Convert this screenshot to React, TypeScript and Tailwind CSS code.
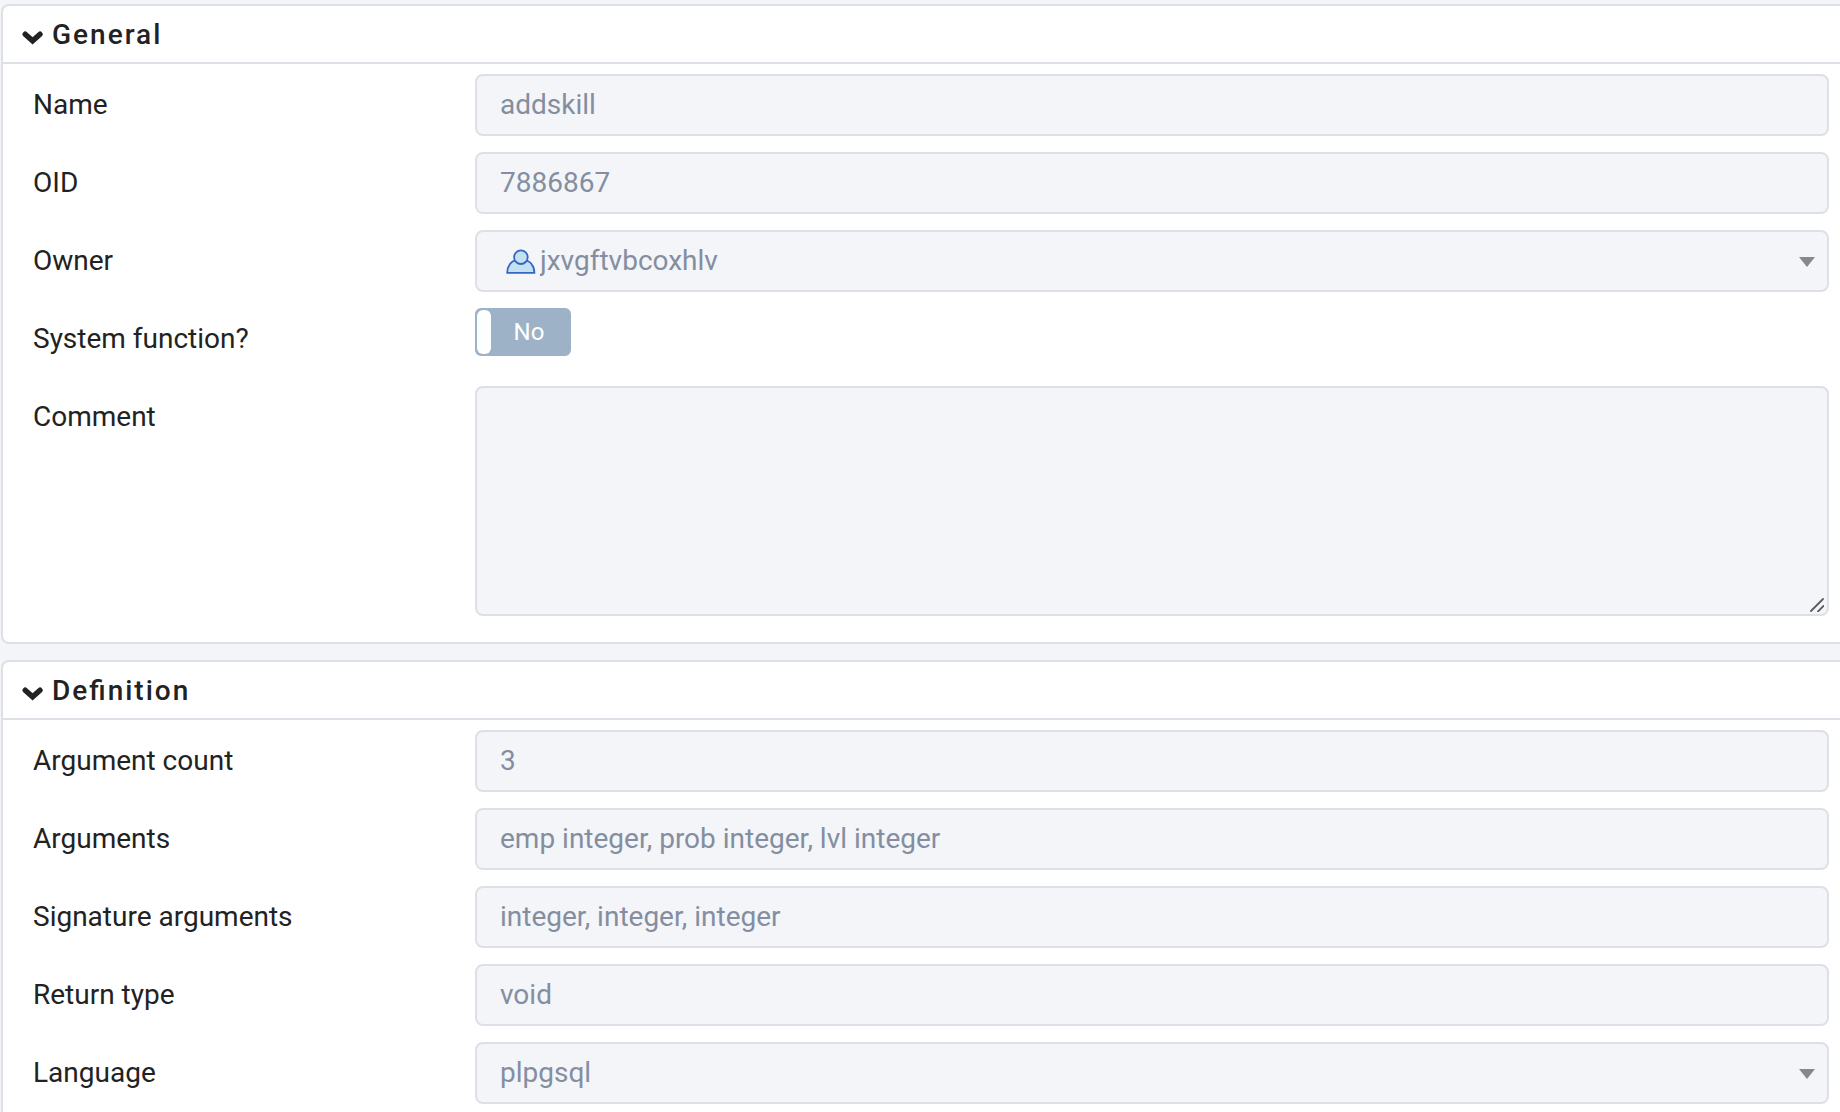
import React, { useState } from 'react';

type Field = {
    id: string;
    label: string;
    kind: 'text' | 'select' | 'role' | 'switch' | 'multiline';
    value: string;
};

const generalFields: Field[] = [
    { id: 'name', label: 'Name', kind: 'text', value: 'addskill' },
    { id: 'oid', label: 'OID', kind: 'text', value: '7886867' },
    { id: 'owner', label: 'Owner', kind: 'role', value: 'jxvgftvbcoxhlv' },
    { id: 'system', label: 'System function?', kind: 'switch', value: 'No' },
    { id: 'comment', label: 'Comment', kind: 'multiline', value: '' }
];

const definitionFields: Field[] = [
    { id: 'argcount', label: 'Argument count', kind: 'text', value: '3' },
    { id: 'args', label: 'Arguments', kind: 'text', value: 'emp integer, prob integer, lvl integer' },
    { id: 'sigargs', label: 'Signature arguments', kind: 'text', value: 'integer, integer, integer' },
    { id: 'rettype', label: 'Return type', kind: 'text', value: 'void' },
    { id: 'language', label: 'Language', kind: 'select', value: 'plpgsql' }
];

const App: React.FC = () => {
    return (
        <main className="flex min-h-screen flex-col gap-4 bg-[#f3f5f9] pl-px pt-1 font-['Roboto',sans-serif] text-[28px] text-[#222222]">
            <Section title="General" fields={generalFields} className="rounded-l-lg border-b-2 pb-[26px]" />
            <Section title="Definition" fields={definitionFields} className="flex-1 rounded-tl-lg pb-2" />
        </main>
    );
};

const Section = ({ title, fields, className }: { title: string, fields: Field[], className: string }) => {
    const [open, setOpen] = useState(true);

    return (
        <section className={`border-l-2 border-t-2 border-[#dde0e6] bg-white ${className}`}>
            <h2 className="border-b-2 border-[#dde0e6]">
                <button
                    type="button"
                    aria-expanded={open}
                    onClick={() => setOpen(!open)}
                    className="flex h-14 w-full items-center gap-2 pl-[19px] pt-0.5 text-left font-medium tracking-[2px] [font-feature-settings:'liga']"
                >
                    <ChevronIcon />
                    {title}
                </button>
            </h2>
            {open && (
                <div className="flex flex-col gap-4 pl-[30px] pr-[11px] pt-[10px]">
                    {fields.map((field) => (
                        <div key={field.id} className="grid min-h-[62px] grid-cols-[442px_minmax(0,1fr)] items-start">
                            <label htmlFor={field.id} className="leading-[62px]">{field.label}</label>
                            <Control field={field} />
                        </div>
                    ))}
                </div>
            )}
        </section>
    );
};

const Control = ({ field }: { field: Field }) => {
    const box = 'block w-full rounded-lg border-2 border-[#dde0e6] bg-[#f3f5f9] text-[#848ea0] opacity-100';

    if (field.kind === 'switch') {
        return (
            <div className="flex h-12 w-24 rounded-md border-2 border-[#9eb2c7] bg-[#9eb2c7]">
                <input id={field.id} type="checkbox" disabled className="h-11 w-[14px] appearance-none rounded-md bg-[#fdfefe]" />
                <span className="flex-1 pr-0.5 text-center text-2xl leading-11 text-white">{field.value}</span>
            </div>
        );
    }

    if (field.kind === 'multiline') {
        return (
            <div className="relative">
                <textarea id={field.id} disabled defaultValue={field.value} className={`${box} h-[230px] resize-none px-[23px] py-3`} />
                <svg className="absolute bottom-1 right-[5px] h-[14px] w-[14px]" viewBox="0 0 14 14" stroke="#5c5d60" strokeWidth="1.8" strokeLinecap="round">
                    <path d="M1 13L13 1M8 13.5L13.5 8" />
                </svg>
            </div>
        );
    }

    if (field.kind === 'text') {
        return <input id={field.id} type="text" disabled defaultValue={field.value} className={`${box} h-[62px] px-[23px] pb-0.5`} />;
    }

    return (
        <div className="relative">
            <select
                id={field.id}
                disabled
                defaultValue={field.value}
                className={`${box} h-[62px] appearance-none pr-12 ${field.kind === 'role' ? 'pl-[63px]' : 'pl-[23px]'}`}
            >
                <option>{field.value}</option>
            </select>
            {field.kind === 'role' && <RoleIcon />}
            <svg className="pointer-events-none absolute right-[14px] top-[27px] h-[10px] w-4" viewBox="0 0 16 10">
                <path d="M0 0H16L8 10Z" fill="#888888" />
            </svg>
        </div>
    );
};

const ChevronIcon = () => (
    <svg className="mt-1.5 h-[14px] w-[22px]" viewBox="0 0 22 14" fill="none" stroke="currentColor" strokeWidth="5.4" strokeLinecap="round">
        <path d="M3.2 3.2L10.6 9.8L18 3.2" />
    </svg>
);

const RoleIcon = () => (
    <svg className="pointer-events-none absolute left-[31px] top-[19px] h-[26px] w-[30px]" viewBox="0 0 30 26" fill="#c5e1f1" stroke="#3468c0" strokeWidth="1.8">
        <path d="M1.2 23.8C1.2 17 5.5 11.4 10.5 11.4H18.5C24 11.4 28.4 17 28.4 23.8Z" />
        <circle cx="14.9" cy="8.2" r="6.8" />
    </svg>
);

export default App;
